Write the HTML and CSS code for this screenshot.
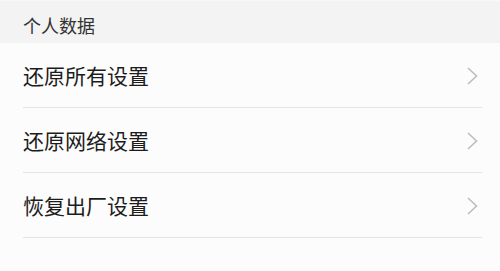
FILE: index.html
```html
<!DOCTYPE html>
<html lang="zh-CN">
<head>
<meta charset="utf-8">
<link rel="stylesheet" href="styles.css">
</head>
<body>
<div class="page">
  <div class="section-header">个人数据</div>
  <ul class="list">
    <li class="row"><span class="label">还原所有设置</span><svg class="chev" viewBox="0 0 11 18" width="11" height="18"><path d="M1 1 L9.5 9 L1 17" fill="none" stroke="#bdbdbd" stroke-width="1.6"/></svg></li>
    <li class="row"><span class="label">还原网络设置</span><svg class="chev" viewBox="0 0 11 18" width="11" height="18"><path d="M1 1 L9.5 9 L1 17" fill="none" stroke="#bdbdbd" stroke-width="1.6"/></svg></li>
    <li class="row"><span class="label">恢复出厂设置</span><svg class="chev" viewBox="0 0 11 18" width="11" height="18"><path d="M1 1 L9.5 9 L1 17" fill="none" stroke="#bdbdbd" stroke-width="1.6"/></svg></li>
  </ul>
</div>
</body>
</html>
```
FILE: styles.css
```css
html, body {
  margin: 0;
  padding: 0;
  background: #fcfcfc;
}
body {
  font-family: "Noto Sans CJK SC", "Noto Sans", sans-serif;
  width: 500px;
  height: 271px;
  overflow: hidden;
}
.page {
  display: flex;
  flex-direction: column;
}
.section-header {
  height: 43px;
  box-sizing: border-box;
  background: #f3f3f3;
  border-top: 1px solid #f8f8f8;
  padding-left: 23px;
  display: flex;
  align-items: center;
  font-size: 18px;
  color: #333;
  padding-top: 6px;
}
.list {
  list-style: none;
  margin: 0;
  padding: 0 18px 0 23px;
}
.row {
  height: 65px;
  box-sizing: border-box;
  border-bottom: 1px solid #e4e4e4;
  display: flex;
  align-items: center;
  justify-content: space-between;
  padding-right: 4px;
  padding-top: 1px;
}
.label {
  font-size: 21px;
  color: #1c1c1c;
  line-height: 1;
}
.chev {
  display: block;
}
```
